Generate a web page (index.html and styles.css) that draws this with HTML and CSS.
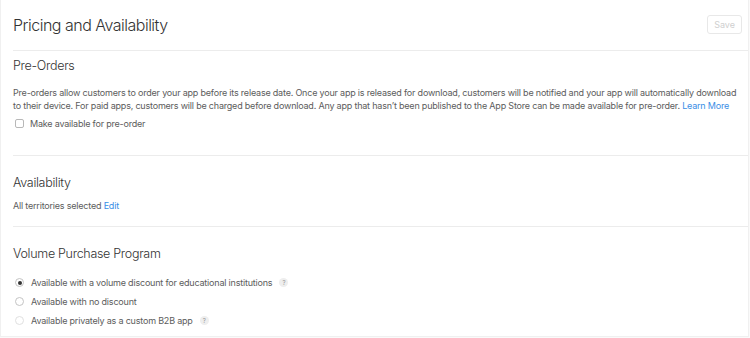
FILE: index.html
```html
<!DOCTYPE html>
<html lang="en">
<head>
    <meta charset="UTF-8">
    <meta name="viewport" content="width=device-width, initial-scale=1.0">
    <title>Pricing and Availability</title>
    <link rel="stylesheet" href="styles.css">
</head>
<body>

    <div class="card">
        <!-- Header -->
        <div class="header">
            <h1>Pricing and Availability</h1>
            <button class="save-btn" disabled>Save</button>
        </div>

        <!-- Pre-Orders -->
        <div class="section first">
            <h2>Pre-Orders</h2>
            <p class="desc">Pre-orders allow customers to order your app before its release date. Once your app is released for download, customers will be notified and your app will automatically download to their device. For paid apps, customers will be charged before download. Any app that hasn’t been published to the App Store can be made available for pre-order. <a href="#">Learn More</a></p>
            <label class="option">
                <span class="checkbox"></span>
                Make available for pre-order
            </label>
        </div>

        <!-- Availability -->
        <div class="section">
            <h2>Availability</h2>
            <p class="info">All territories selected <a href="#">Edit</a></p>
        </div>

        <!-- Volume Purchase Program -->
        <div class="section last">
            <h2>Volume Purchase Program</h2>
            <div class="radios">
                <label class="option">
                    <span class="radio checked"></span>
                    Available with a volume discount for educational institutions
                    <span class="help">?</span>
                </label>
                <label class="option">
                    <span class="radio"></span>
                    Available with no discount
                </label>
                <label class="option disabled">
                    <span class="radio"></span>
                    Available privately as a custom B2B app
                    <span class="help">?</span>
                </label>
            </div>
        </div>
    </div>

</body>
</html>
```

FILE: styles.css
```css
* {
    margin: 0;
    padding: 0;
    box-sizing: border-box;
}
body {
    font-family: Inter, "Noto Sans", sans-serif;
    background-color: #fafafa;
    color: #333;
}
.card {
    width: 749px;
    height: 337px;
    background: white;
    border: 1px solid #f0f0f0;
    border-top: none;
    padding-left: 12px;
}
/* Header */
.header {
    display: flex;
    justify-content: space-between;
    align-items: center;
    height: 51px;
    border-bottom: 1px solid #ececec;
    padding-right: 6px;
}
.header h1 {
    font-size: 16px;
    line-height: 20px;
    font-weight: 300;
    color: #333;
    letter-spacing: -0.5px;
}
.save-btn {
    font-family: inherit;
    font-size: 9px;
    color: #cfcfcf;
    background: white;
    border: 1px solid #e8e8e8;
    border-radius: 3px;
    padding: 3px 6px;
    margin-bottom: 2px;
}
/* Sections */
.section {
    border-bottom: 1px solid #ececec;
    padding: 19px 0 14px;
}
.section.first {
    padding: 7px 0 23px;
}
.section.last {
    border-bottom: none;
}
.section h2 {
    font-size: 12.5px;
    line-height: 16px;
    font-weight: 300;
    letter-spacing: -0.3px;
    color: #333;
    margin-bottom: 8px;
}
.section.first h2 {
    margin-bottom: 12px;
}
.desc {
    font-size: 9px;
    line-height: 13px;
    letter-spacing: -0.2px;
    color: #5c5c5c;
    margin-bottom: 2px;
    padding-right: 8px;
}
.info {
    font-size: 9px;
    line-height: 13px;
    letter-spacing: -0.2px;
    color: #5c5c5c;
}
a {
    color: #3a8ee6;
    text-decoration: none;
}
.option {
    display: flex;
    align-items: center;
    font-size: 9px;
    letter-spacing: -0.2px;
    color: #5c5c5c;
    height: 18px;
}
.checkbox {
    width: 9px;
    height: 9px;
    border: 1px solid #b8b8b8;
    border-radius: 2px;
    margin: 0 6px 0 2px;
}
.radios {
    padding-top: 3px;
}
.radios .option {
    height: 19px;
}
.radio {
    width: 9px;
    height: 9px;
    border: 1px solid #c4c4c4;
    border-radius: 50%;
    margin: 0 7px 0 2px;
    display: flex;
    align-items: center;
    justify-content: center;
}
.radio.checked::after {
    content: "";
    width: 4px;
    height: 4px;
    border-radius: 50%;
    background: #333;
}
.option.disabled .radio {
    border-color: #e0e0e0;
}
.help {
    display: inline-flex;
    align-items: center;
    justify-content: center;
    width: 9px;
    height: 9px;
    border-radius: 50%;
    background: #eee;
    color: #999;
    font-size: 6px;
    margin-left: 7px;
}
```
